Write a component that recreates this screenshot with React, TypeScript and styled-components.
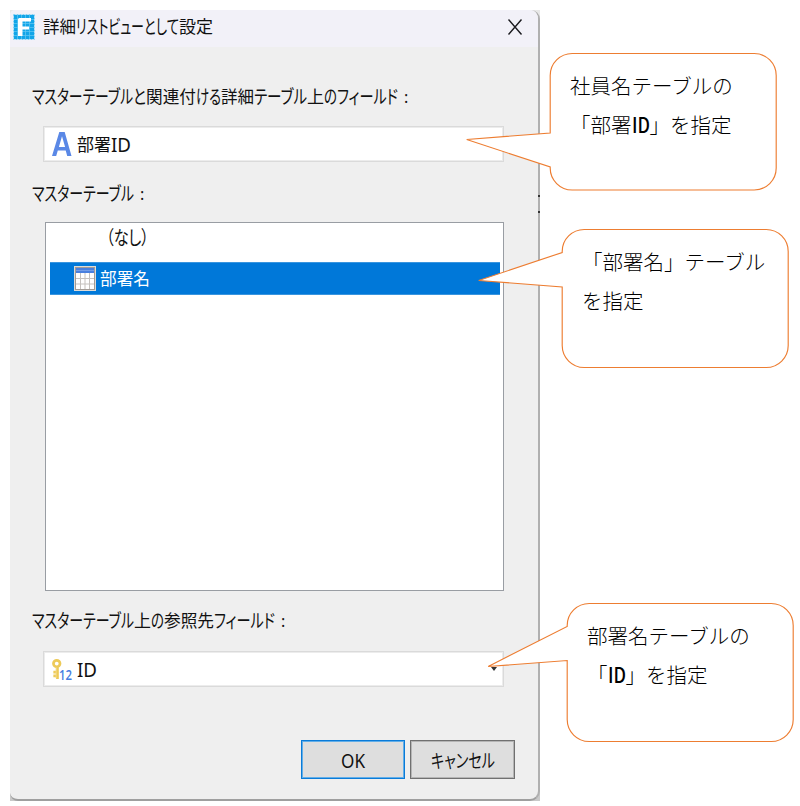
import React, { useLayoutEffect, useRef, useState } from "react";
import styled, { createGlobalStyle, css } from "styled-components";

const GlobalStyle = createGlobalStyle`
  * { box-sizing: border-box; }
  body { margin: 0; background: #fff; }
`;

const Page = styled.main`
  position: relative;
  width: 800px;
  height: 806px;
  padding: 10px;
  overflow: hidden;
  font-family: "Noto Sans", "Noto Sans CJK JP", sans-serif;
  color: #111;
`;

/* Desktop strip that shows behind the rounded corners of the window. */
const Backdrop = styled.div`
  width: 530px;
  height: 791px;
  background: linear-gradient(to bottom, #e8e8e8 30%, #c9c9c9 100%);
`;

const Window = styled.section`
  display: flex;
  flex-direction: column;
  width: 530px;
  height: 791px;
  background: #efefef;
  border-right: 2px solid #b0b0b0;
  border-bottom: 2px solid #9f9f9f;
  border-radius: 5px 9px 10px 8px;
  overflow: hidden;
`;

const TitleBar = styled.header`
  display: flex;
  align-items: center;
  height: 37px;
  flex: none;
  padding: 0 15px 3px 3px;
  background: #f2f1f8;
`;

const Title = styled.h1`
  display: flex;
  margin: 0 auto 0 8px;
  font-size: 17px;
  font-weight: 400;
  line-height: 24px;
`;

const CloseButton = styled.button`
  display: flex;
  padding: 0;
  border: 0;
  background: none;
`;

const Body = styled.div`
  display: flex;
  flex-direction: column;
  flex: 1;
  padding: 37px 23px 20px 22px;
`;

const Label = styled.div`
  display: flex;
  height: 26px;
  font-size: 17px;
  line-height: 26px;
`;

const Field = styled.div<{ $top: number; $bottom: number }>`
  display: flex;
  align-items: center;
  width: 461px;
  height: 36px;
  flex: none;
  margin: ${(p) => p.$top}px 0 ${(p) => p.$bottom}px 11px;
  padding: 0 5px 0 8px;
  background: #fff;
  border: 1px solid #dadada;
  box-shadow: inset 0 0 0 1px #ececec;
  font-size: 17px;
  line-height: 24px;
`;

const FieldText = styled.span`
  display: flex;
  margin: 3px auto 0 5px;
`;

const ListBox = styled.div`
  width: 459px;
  height: 369px;
  flex: none;
  margin: 15px 0 17px 13px;
  padding: 0 3px 0 4px;
  background: #fff;
  border: 1px solid #999da3;
  font-size: 17px;
`;

const RowText = styled.span`
  display: flex;
  margin: 1px 0 0 4px;
`;

const ListRow = styled.div<{ $selected?: boolean }>`
  display: flex;
  align-items: center;
  height: 33px;
  padding: 0 0 3px 52px;
  line-height: 24px;
  margin-bottom: 6px;
  ${(p) =>
    p.$selected &&
    css`
      padding: 0 0 0 24px;
      color: #fff;
      background: #0078d9;
      border-top: 1px solid #3995df;
      border-bottom: 1px solid #3995df;
    `}
`;

const Actions = styled.footer`
  display: flex;
  justify-content: flex-end;
  gap: 5px;
  margin-top: 53px;
  flex: none;
`;

const Button = styled.button<{ $primary?: boolean }>`
  display: flex;
  align-items: center;
  justify-content: center;
  width: ${(p) => (p.$primary ? 104 : 105)}px;
  height: 39px;
  padding: 4px 0 0;
  border: 1px solid ${(p) => (p.$primary ? "#0a7bd8" : "#707070")};
  box-shadow: inset 0 0 0 1px ${(p) => (p.$primary ? "#62aee8" : "#b5b5b5")};
  background: #dedede;
  color: #111;
  font: inherit;
  font-size: 17px;
  line-height: 24px;
`;

const RunBox = styled.span`
  display: inline-block;
  flex: none;
  white-space: nowrap;
`;

const RunText = styled.span<{ $tall: boolean }>`
  display: inline-block;
  transform-origin: 0 50%;
  font-size: ${(p) => (p.$tall ? "1.12em" : "1em")};
  font-feature-settings: "palt";
`;

function Run({ w, children }: { w: number; children: string }) {
  const ref = useRef<HTMLSpanElement>(null);
  const [scale, setScale] = useState(1);
  useLayoutEffect(() => {
    if (ref.current) setScale((w / ref.current.getBoundingClientRect().width) * scale);
  }, [w]);
  return (
    <RunBox style={{ width: w }}>
      <RunText ref={ref} $tall={/[ぁ-ヶA-Z]/.test(children)} style={{ transform: `scaleX(${scale})` }}>{children}</RunText>
    </RunBox>
  );
}

const Runs = ({ items }: { items: [string, number][] }) => (
  <>{items.map(([text, w], i) => <Run key={i} w={w}>{text}</Run>)}</>
);

const Colon = styled.span`
  margin-left: 6px;
  font-size: 16px;
`;

const AppIcon = () => (
  <svg width="22" height="26" viewBox="0 0 22 26">
    <rect x="1" y="1" width="20" height="24" fill="#12a5e8" />
    <path d="M1 5.5h20M1 9.5h20M1 13.5h20M1 17.5h20M1 21.5h20M4.5 1v24M8.5 1v24M12.5 1v24M16.5 1v24" stroke="#65c8f3" strokeWidth=".7" />
    <rect x=".5" y=".5" width="21" height="25" fill="none" stroke="#83d1f4" strokeDasharray="2 1" />
    <path d="M6 4h12v3.500H9.500v5H16v3H9.500V22H5V5z" fill="#fff" />
  </svg>
);

const CloseIcon = () => (
  <svg width="16" height="18" viewBox="0 0 16 18">
    <path d="M1.500 1.500l13 15M14.500 1.500l-13 15" stroke="#1b1b1f" strokeWidth="1.4" fill="none" />
  </svg>
);

const TypeIcon = () => (
  <svg width="20" height="24" viewBox="0 0 20 24">
    <path d="M7.300 0h5.400L19.500 24h-4.300l-1.500-5.500H5.800L4.200 24H0ZM10 4.300L6.900 15h6.200Z" fill="#5a88e6" fillRule="evenodd" />
  </svg>
);

const TableIcon = () => (
  <svg width="22" height="25" viewBox="0 0 22 25">
    <rect x=".5" y=".5" width="21" height="24" fill="#fff" stroke="#dedbd7" />
    <rect x="1.5" y="1.5" width="19" height="22" fill="#fff" stroke="#a19b96" />
    <rect x="2" y="2" width="18" height="5" fill="#4a80de" />
    <path d="M2 12.5h18M2 18h18M6.5 7v16M11 7v16M15.5 7v16" stroke="#c5c1be" />
    <path d="M2 4.5h18" stroke="#7da5ea" strokeWidth=".8" />
  </svg>
);

const KeyBadge = styled.span`
  display: flex;
  align-items: flex-end;
  width: 20px;
  height: 25px;
  flex: none;
`;

const Digits = styled.span`
  margin: 0 0 -2px -3px;
  color: #467de1;
  font: 600 14px/18px "Open Sans", sans-serif;
`;

const KeyIcon = () => (
  <KeyBadge>
    <svg width="11" height="25" viewBox="0 0 11 25">
      <circle cx="5.2" cy="6" r="3.600" fill="none" stroke="#edca58" strokeWidth="3" />
      <path d="M6 10v13M6 15.5H1.500M6 19.500H1.500" stroke="#edca58" strokeWidth="3" />
      <path d="M4.500 10v12" stroke="#f5dc8b" />
    </svg>
    <Digits><Run w={13}>12</Run></Digits>
  </KeyBadge>
);

const Arrow = styled.span`
  width: 0;
  height: 0;
  margin: -1px 1px 0 0;
  border: 3px solid transparent;
  border-top: 4px solid #333;
  border-bottom: 0;
`;

const EdgeMark = styled.i<{ $y: number }>`
  position: absolute;
  left: 538px;
  top: ${(p) => p.$y}px;
  width: 2px;
  height: 2px;
  background: #333;
`;

const CalloutBox = styled.aside<{ $x: number; $y: number }>`
  position: absolute;
  left: ${(p) => p.$x}px;
  top: ${(p) => p.$y}px;
  width: 227px;
  height: 139px;
  padding: 13px 0 0 20px;
  font-family: "Noto Sans CJK JP", sans-serif;
  font-size: 20.5px;
  font-weight: 300;
  line-height: 39px;
  white-space: nowrap;
  color: #000;
`;

const Bubble = styled.svg`
  position: absolute;
  left: 0;
  top: 0;
  overflow: visible;
`;

const CalloutLine = styled.div`
  position: relative;
  display: flex;
`;

const Strong = styled.b`
  font-size: 18.5px;
  font-weight: 500;
`;

interface CalloutProps {
  x: number;
  y: number;
  h: number;
  tip: [number, number];
  base: [number, number];
  children: React.ReactNode;
}

function Callout({ x, y, h, tip, base, children }: CalloutProps) {
  const d = `M0 ${base[0]}V22A22 22 0 0 1 22 0H204A22 22 0 0 1 226 22V${h - 22}A22 22 0 0 1 204 ${h}H22A22 22 0 0 1 0 ${h - 22}V${base[1]}L${tip[0]} ${tip[1]}Z`;
  return (
    <CalloutBox $x={x} $y={y}>
      <Bubble width="227" height="139">
        <path d={d} transform="translate(.2 .5)" fill="#fff" stroke="#ed7d31" strokeWidth="1.15" />
      </Bubble>
      {children}
    </CalloutBox>
  );
}

export default function App() {
  return (
    <Page>
      <GlobalStyle />
      <Backdrop>
        <Window>
          <TitleBar>
            <AppIcon />
            <Title><Runs items={[["詳細", 33], ["リストビュー", 68], ["として", 35], ["設定", 34]]} /></Title>
            <CloseButton aria-label="閉じる"><CloseIcon /></CloseButton>
          </TitleBar>
          <Body>
            <Label>
              <Runs items={[["マスターテーブル", 101], ["と", 13], ["関連付", 50], ["ける", 25], ["詳細", 33], ["テーブル", 53], ["上", 17], ["の", 13], ["フィールド", 61]]} />
              <Colon>:</Colon>
            </Label>
            <Field $top={16} $bottom={19}>
              <TypeIcon />
              <FieldText><Runs items={[["部署", 34], ["ID", 20]]} /></FieldText>
            </Field>
            <Label><Runs items={[["マスターテーブル", 102]]} /><Colon>:</Colon></Label>
            <ListBox>
              <ListRow><RowText><Runs items={[["（なし）", 43]]} /></RowText></ListRow>
              <ListRow $selected><TableIcon /><RowText><Runs items={[["部署名", 50]]} /></RowText></ListRow>
            </ListBox>
            <Label>
              <Runs items={[["マスターテーブル", 102], ["上", 17], ["の", 13], ["参照先", 50], ["フィールド", 61]]} />
              <Colon>:</Colon>
            </Label>
            <Field $top={17} $bottom={0}>
              <KeyIcon />
              <FieldText><Runs items={[["ID", 20]]} /></FieldText>
              <Arrow />
            </Field>
            <Actions>
              <Button $primary><Run w={24}>OK</Run></Button>
              <Button><Run w={64}>キャンセル</Run></Button>
            </Actions>
          </Body>
        </Window>
      </Backdrop>
      <EdgeMark $y={195} />
      <EdgeMark $y={211} />
      <Callout x={550} y={53} h={136.5} tip={[-83.5, 86]} base={[79.5, 113.5]}>
        <CalloutLine>社員名テーブルの</CalloutLine>
        <CalloutLine>「部署<Strong><Run w={18}>ID</Run></Strong>」を指定</CalloutLine>
      </Callout>
      <Callout x={562} y={229} h={138} tip={[-83.5, 51]} base={[23, 57.5]}>
        <CalloutLine>「部署名」テーブル</CalloutLine>
        <CalloutLine>を指定</CalloutLine>
      </Callout>
      <Callout x={567} y={603} h={138} tip={[-79, 63]} base={[23, 57]}>
        <CalloutLine>部署名テーブルの</CalloutLine>
        <CalloutLine>「<Strong><Run w={18}>ID</Run></Strong>」を指定</CalloutLine>
      </Callout>
    </Page>
  );
}
